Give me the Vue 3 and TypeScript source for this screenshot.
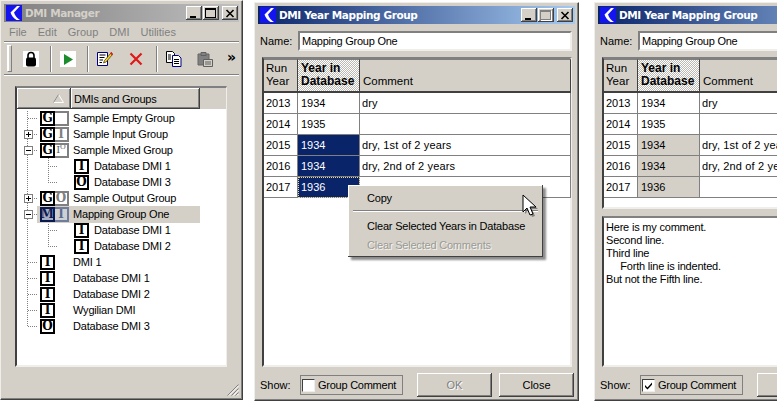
<script setup lang="ts">
type Row = { label: string; depth: number; exp?: string; kind: string; sel?: boolean }
const rows: Row[] = [
  { label: 'Sample Empty Group', depth: 0, kind: 'G_' },
  { label: 'Sample Input Group', depth: 0, exp: '+', kind: 'GI' },
  { label: 'Sample Mixed Group', depth: 0, exp: '-', kind: 'GM' },
  { label: 'Database DMI 1', depth: 1, kind: 'I' },
  { label: 'Database DMI 3', depth: 1, kind: 'O' },
  { label: 'Sample Output Group', depth: 0, exp: '+', kind: 'GO' },
  { label: 'Mapping Group One', depth: 0, exp: '-', kind: 'MI', sel: true },
  { label: 'Database DMI 1', depth: 1, kind: 'I' },
  { label: 'Database DMI 2', depth: 1, kind: 'I' },
  { label: 'DMI 1', depth: 0, kind: 'I' },
  { label: 'Database DMI 1', depth: 0, kind: 'I' },
  { label: 'Database DMI 2', depth: 0, kind: 'I' },
  { label: 'Wygilian DMI', depth: 0, kind: 'I' },
  { label: 'Database DMI 3', depth: 0, kind: 'O' },
]
const years = [
  { run: 2013, db: 1934, comment: 'dry', sel: false },
  { run: 2014, db: 1935, comment: '', sel: false },
  { run: 2015, db: 1934, comment: 'dry, 1st of 2 years', sel: true },
  { run: 2016, db: 1934, comment: 'dry, 2nd of 2 years', sel: true },
  { run: 2017, db: 1936, comment: '', sel: true },
]
const windows = [
  { id: 'a', left: 254, showComment: false },
  { id: 'b', left: 594, showComment: true },
]
const commentLines = ['Here is my comment.', 'Second line.', 'Third line', '     Forth line is indented.', 'But not the Fifth line.']
const menus = ['File', 'Edit', 'Group', 'DMI', 'Utilities']
const dots: string[] = []
for (let i = 0; i < 14; i++) {
  const d = rows[i].depth
  const y = 9.5 + i * 16
  if (d === 0) dots.push(`M28 ${y}H37`)
  else dots.push(`M48 ${y}H57`)
}
dots.push('M27.5 2V218', 'M48.5 41V73', 'M48.5 105V137')
const dotPath = dots.join('')
</script>

<template>
  <div class="desk">
    <section class="win mgr">
      <header class="title inactive">
        <svg class="logo" viewBox="0 0 16 16"><rect width="16" height="16" fill="#1414f0" /><path d="M11 1 4.500 7.500c1 3 3 5.500 6 7.500H14c-3-2-5-4.500-6-7.500L14 1z" fill="#fff" /></svg>
        <span class="ttext">DMI Manager</span>
        <span class="caps mgrcaps">
          <span class="cap"><i class="min"></i></span>
          <span class="cap"><i class="max"></i></span>
          <span class="cap close"><svg viewBox="0 0 10 9"><path d="M1.500 1l7 7M8.500 1l-7 7" stroke="#000" stroke-width="1.600" /></svg></span>
        </span>
      </header>
      <nav class="menubar"><span v-for="m in menus" :key="m">{{ m }}</span></nav>
      <div class="toolbar">
        <span class="grip"></span>
        <span class="tool w16 first">
          <svg viewBox="0 0 16 16"><rect width="16" height="16" fill="#fff" /><path d="M5 7V4.500a3 3 0 0 1 6 0V7" fill="none" stroke="#000" stroke-width="1.600" /><rect x="3" y="6.500" width="10" height="9" rx="2" fill="#000" /></svg>
        </span>
        <span class="tsep s1"></span>
        <span class="tool w16 t2">
          <svg viewBox="0 0 16 16"><rect width="16" height="16" fill="#fff" /><path d="M4 3l9 5.500L4 14z" fill="#1c8c2c" /></svg>
        </span>
        <span class="tsep s2"></span>
        <span class="tool w16 t3">
          <svg viewBox="0 0 16 16"><path d="M.5 1.500h10v13H.5z" fill="#fff" stroke="#000080" /><path d="M2.500 4h6M2.500 6.500h5M2.500 9h3.500M2.500 11.500h2.500" stroke="#000" /><path d="M14.500 1.500 7.500 9.500 6.500 12l2.500-1 6.500-7.500z" fill="#ffd820" stroke="#303000" stroke-width=".7" /><path d="M14 1l2 2-1 1.500-2-2z" fill="#e02020" /></svg>
        </span>
        <span class="tool w16 t4">
          <svg viewBox="0 0 16 16"><path d="M2.500 2.500l11 11M13.500 2.500l-11 11" stroke="#e01818" stroke-width="2.200" /></svg>
        </span>
        <span class="tsep s3"></span>
        <span class="tool w16 t5">
          <svg viewBox="0 0 16 16"><path d="M.5.5h6l2 2v9h-8z" fill="#fff" stroke="#000" /><path d="M6.500 4.500h6l2.500 2.500v8.500H6.500z" fill="#fff" stroke="#000080" /><path d="M8 8.500h5M8 10.500h5M8 12.500h5M2 4h3M2 6h3M2 8h3" stroke="#000" /></svg>
        </span>
        <span class="tool w16 t6">
          <svg viewBox="0 0 16 16"><path d="M1 3h11v11H1z" fill="#808080" /><path d="M4 1.500h5v3H4z" fill="#a0a0a0" stroke="#606060" /><path d="M1 3h11v11H1z" fill="none" stroke="#666" /><path d="M6.500 8.500h9v7h-9z" fill="#d4d0c8" stroke="#606060" /><path d="M8 11h6M8 13h6" stroke="#606060" /></svg>
        </span>
        <span class="more">»</span>
      </div>
      <div class="treebox">
        <div class="treehead">
          <span class="th1"><svg viewBox="0 0 11 9"><path d="M5.500 .5 10.500 8.500H.5z" fill="none" stroke="#fff" /><path d="M5.500 .5.5 8.500" stroke="#808080" /></svg></span>
          <span class="th2">DMIs and Groups</span>
        </div>
        <div class="treebody">
          <svg class="lines" width="211" height="260"><path :d="dotPath" fill="none" stroke="#808080" stroke-dasharray="1 1" /></svg>
          <div v-for="(r, i) in rows" :key="i" class="row">
            <span class="exp" :class="{ on: r.exp }">
              <template v-if="r.exp">
                <i class="h"></i><i v-if="r.exp === '+'" class="v"></i>
              </template>
            </span>
            <div class="main" :class="{ sel: r.sel, child: r.depth === 1 }">
              <span class="slot" :class="{ wide: r.depth === 0 }">
                <template v-if="r.kind.length === 2">
                  <span class="glyph"><b>{{ r.kind[0] }}</b></span>
                  <span class="glyph gray">
                    <b v-if="r.kind[1] === 'I' || r.kind[1] === 'O'">{{ r.kind[1] }}</b>
                    <small v-else-if="r.kind === 'GM'">I<sup>O</sup></small>
                  </span>
                </template>
                <span v-else class="glyph"><b>{{ r.kind }}</b></span>
              </span>
              <span class="rowtext">{{ r.label }}</span>
            </div>
          </div>
        </div>
      </div>
      <svg class="sizer" viewBox="0 0 12 12"><path d="M11.500 .5.5 11.500M11.500 4.500l-7 7M11.500 8.500l-3 3" stroke="#808080" /><path d="M11.500 2 2 11.500M11.500 6l-5 5.500M11.500 10l-1.500 1.500" stroke="#fff" /></svg>
    </section>

    <section v-for="w in windows" :key="w.id" class="win map" :style="{ left: w.left + 'px' }">
      <header class="title">
        <svg class="logo" viewBox="0 0 16 16"><rect width="16" height="16" fill="#1414f0" /><path d="M11 1 4.500 7.500c1 3 3 5.500 6 7.500H14c-3-2-5-4.500-6-7.500L14 1z" fill="#fff" /></svg>
        <span class="ttext">DMI Year Mapping Group</span>
        <span class="caps">
          <span class="cap"><i class="min"></i></span>
          <span class="cap"><i class="max dis"></i></span>
          <span class="cap close"><svg viewBox="0 0 10 9"><path d="M1.500 1l7 7M8.500 1l-7 7" stroke="#000" stroke-width="1.600" /></svg></span>
        </span>
      </header>
      <div class="namerow">
        <label>Name:</label>
        <div class="input">Mapping Group One</div>
      </div>
      <div class="frame">
        <div class="grid">
          <div class="hc"><span>Run<br />Year</span></div>
          <div class="hc hot"><strong>Year in<br />Database</strong></div>
          <div class="hc"><span>Comment</span></div>
          <template v-for="y in years" :key="y.run">
            <div class="c">{{ y.run }}</div>
            <div class="c mid" :class="{ picked: y.sel && !w.showComment, idle: y.sel && w.showComment, focus: y.run === 2017 && !w.showComment }">{{ y.db }}</div>
            <div class="c note">{{ y.comment }}</div>
          </template>
        </div>
      </div>
      <pre v-if="w.showComment" class="comment">{{ commentLines.join('\n') }}</pre>
      <footer class="foot">
        <label class="show">Show:</label>
        <span class="gc">
          <span class="check">
            <svg v-if="w.showComment" viewBox="0 0 9 9"><path d="M1 4l2.500 2.500L8 1.500v2.300L3.500 8.500 1 6z" fill="#000" /></svg>
          </span>
          Group Comment
        </span>
        <span class="btn off">OK</span>
        <span class="btn">Close</span>
      </footer>
      <div v-if="!w.showComment" class="popup">
        <div class="mi">Copy</div>
        <div class="msep"></div>
        <div class="mi m2">Clear Selected Years in Database</div>
        <div class="mi dim">Clear Selected Comments</div>
        <svg class="cursor" width="20" height="26" viewBox="0 0 20 26">
          <path d="M3 3v17l4-4 3 7 3-1-3-7h6z" fill="#505050" opacity=".6" />
          <path d="M1 1v17l4-4 3 7 3-1-3-7h6z" fill="#fff" stroke="#000" />
        </svg>
      </div>
    </section>
  </div>
</template>

<style>
html, body { margin: 0; background: #fff; }
</style>

<style scoped>
.desk {
  position: relative;
  width: 777px;
  height: 402px;
  overflow: hidden;
  background: #fff;
  font: 11px "Liberation Sans", Tahoma, sans-serif;
  color: #000;
}
.win {
  position: absolute;
  box-sizing: border-box;
  background: #d4d0c8;
  display: flex;
  flex-direction: column;
  padding: 3px;
  border-right: 1px solid #404040;
  border-bottom: 1px solid #404040;
  border-top: 1px solid #f0eeea;
  border-left: 1px solid #f0eeea;
  box-shadow: inset -1px -1px 0 #808080;
}
.mgr { left: 0; top: 0; width: 243px; height: 400px; }
.map { top: 2px; width: 325px; height: 399px; }
.title {
  height: 18px;
  flex: none;
  display: flex;
  align-items: center;
  padding: 0 2px;
  background: linear-gradient(90deg, #0a246a, #a6caf0);
  color: #fff;
}
.title.inactive {
  background: linear-gradient(90deg, #808080, #c0c0c0);
  color: #d4d0c8;
}
.logo { width: 16px; height: 16px; flex: none; }
.ttext {
  margin-left: 3px;
  font: bold 10.500px "DejaVu Sans", sans-serif;
  letter-spacing: -.4px;
  white-space: nowrap;
}
.caps { margin-left: auto; display: flex; gap: 1px; }
.mgrcaps { margin-right: -1px; }
.cap {
  box-sizing: border-box;
  width: 16px;
  height: 14px;
  background: #d4d0c8;
  box-shadow: inset -1px -1px 0 #404040, inset 1px 1px 0 #fff, inset -2px -2px 0 #808080;
  position: relative;
  display: flex;
  align-items: center;
  justify-content: center;
}
.cap.close { margin-left: 2px; }
.cap svg { width: 10px; height: 9px; }
.min { width: 6px; height: 2px; background: #000; margin-top: 7px; margin-right: 3px; }
.max { width: 9px; height: 7px; border: 1px solid #000; border-top-width: 2px; margin-right: 1px; }
.max.dis { border-color: #808080; box-shadow: 1px 1px 0 #fff; }
.menubar {
  display: flex;
  height: 19px;
  flex: none;
  align-items: center;
  gap: 11px;
  padding-left: 5px;
  color: #808080;
  font-size: 11px;
  border-bottom: 1px solid #808080;
  box-shadow: 0 1px 0 #fff;
}
.toolbar {
  height: 31px;
  flex: none;
  display: flex;
  align-items: center;
  border-bottom: 1px solid #808080;
  box-shadow: 0 1px 0 #fff;
  margin-top: 1px;
}
.grip {
  width: 3px;
  height: 25px;
  margin-left: 3px;
  background: #d4d0c8;
  border: 1px solid #808080;
  border-top-color: #fff;
  border-left-color: #fff;
  box-shadow: inset 1px 0 0 #fff;
}
.tool { display: block; height: 16px; flex: none; }
.tool svg { display: block; width: 16px; height: 16px; }
.w16 { width: 16px; }
.first { margin-left: 11px; }
.tsep { width: 1px; height: 26px; background: #808080; box-shadow: 1px 0 0 #fff; flex: none; }
.s1 { margin-left: 11px; }
.t2 { margin-left: 9px; }
.s2 { margin-left: 11px; }
.t3 { margin-left: 9px; }
.t4 { margin-left: 15px; }
.s3 { margin-left: 12px; }
.t5 { margin-left: 9px; }
.t6 { margin-left: 15px; }
.more { margin-left: 14px; font: bold 14px "DejaVu Sans", sans-serif; margin-top: -3px; }
.treebox {
  margin: 11px 0 0 11px;
  width: 212px;
  height: 281px;
  box-sizing: border-box;
  border: 1px solid #808080;
  border-left: 2px solid #404040;
  border-top: 2px solid #808080;
  border-right-color: #f0eeea;
  border-bottom: 2px solid #f0eeea;
  background: #d4d0c8;
  display: flex;
  flex-direction: column;
  flex: none;
}
.treehead { display: flex; height: 21px; flex: none; }
.th1, .th2 {
  box-sizing: border-box;
  height: 21px;
  display: flex;
  align-items: center;
  box-shadow: inset -1px -1px 0 #404040, inset 1px 1px 0 #fff, inset -2px -2px 0 #808080;
}
.th1 { width: 54px; justify-content: flex-end; padding-right: 7px; }
.th1 svg { width: 11px; height: 9px; }
.th2 { width: 129px; padding-left: 3px; letter-spacing: -.25px; }
.treebody { position: relative; flex: 1; background: #fff; padding-top: 1px; }
.lines { position: absolute; left: -17px; top: 0; pointer-events: none; }
.row { height: 16px; display: flex; align-items: center; position: relative; padding-left: 7px; }
.exp { width: 9px; height: 9px; flex: none; position: relative; box-sizing: border-box; }
.exp.on { border: 1px solid #808080; background: #fff; }
.exp .h { position: absolute; left: 1px; top: 3px; width: 5px; height: 1px; background: #000; }
.exp .v { position: absolute; left: 3px; top: 1px; width: 1px; height: 5px; background: #000; }
.main {
  margin-left: 4px;
  width: 163px;
  height: 16px;
  padding-left: 3px;
  box-sizing: border-box;
  display: flex;
  align-items: center;
  flex: none;
  letter-spacing: -.2px;
}
.main.child { padding-left: 37px; }
.main.sel { background: #d4d0c8; height: 17px; }
.main.sel .glyph { border-color: #0a1a50; background: #a8aec4; color: #0a1a50; }
.main.sel .glyph.gray { border-color: #6f7c9e; background: #cfd0d0; color: #5a6a90; }
.slot { width: 20px; flex: none; display: flex; }
.slot.wide { width: 33px; }
.glyph {
  box-sizing: border-box;
  width: 15px;
  height: 15px;
  border: 2px solid #000;
  background: #fff;
  display: flex;
  align-items: center;
  justify-content: center;
  font: bold 12px/1 "DejaVu Serif", serif;
  letter-spacing: 0;
  overflow: hidden;
}
.glyph.gray { border-color: #808080; border-left-width: 0; color: #808080; width: 14px; }
.glyph small { font: 10px/1 "DejaVu Serif", serif; color: #606060; }
.glyph sup { font-size: 7px; vertical-align: 4px; line-height: 0; }
.rowtext { white-space: nowrap; }
.sizer { position: absolute; right: 3px; bottom: 3px; width: 12px; height: 12px; }

.namerow { display: flex; align-items: center; margin-top: 7px; flex: none; }
.namerow label { width: 40px; padding-left: 2px; box-sizing: border-box; }
.input {
  width: 274px;
  height: 20px;
  box-sizing: border-box;
  background: #fff;
  border: 2px solid #808080;
  border-right-color: #f0eeea;
  border-bottom-color: #f0eeea;
  padding-left: 2px;
  line-height: 16px;
  letter-spacing: -.25px;
  white-space: nowrap;
}
.frame {
  flex: 1;
  min-height: 0;
  margin: 6px 4px 0;
  box-sizing: border-box;
  width: 310px;
  background: #fff;
  border: 2px solid #808080;
  border-right-color: #f0eeea;
  border-bottom-color: #f0eeea;
  border-left-color: #404040;
}
.grid {
  display: grid;
  grid-template-columns: 34px 62px 211px;
  grid-template-rows: 34px;
  grid-auto-rows: 21px;
}
.hc {
  box-sizing: border-box;
  background: #d4d0c8;
  border: 1px solid #404040;
  border-left-width: 0;
  border-top-color: #808080;
  border-bottom-width: 2px;
  padding: 3px 0 3px 2px;
  display: flex;
  align-items: flex-end;
  line-height: 13px;
  font-size: 11.500px;
}
.hc:nth-child(3) { padding-left: 3px; }
.hot {
  background: repeating-conic-gradient(#bdbab3 0 25%, #fff 0 50%) 0 0 / 2px 2px;
  padding-left: 3px;
}
.hot strong { font: bold 12px/13px "Liberation Sans", sans-serif; white-space: nowrap; }
.c {
  box-sizing: border-box;
  border-right: 1px solid #808080;
  border-bottom: 1px solid #808080;
  padding-left: 2px;
  line-height: 20px;
  white-space: nowrap;
  overflow: hidden;
}
.mid { padding-left: 3px; }
.note { letter-spacing: .15px; }
.picked { background: #0a246a; color: #fff; }
.idle { background: #d4d0c8; }
.focus { outline: 1px dotted #e8d890; outline-offset: -1px; }
.comment {
  flex: none;
  box-sizing: border-box;
  width: 310px;
  height: 151px;
  margin: 7px 4px 0;
  padding: 3px 2px;
  background: #fff;
  border: 2px solid #808080;
  border-left-color: #404040;
  border-right-color: #f0eeea;
  border-bottom-color: #f0eeea;
  font: 11px/13px "Liberation Sans", sans-serif;
  letter-spacing: -.2px;
}
.foot { height: 24px; flex: none; margin-top: 6px; display: flex; align-items: center; }
.show { margin-left: 2px; width: 40px; }
.gc {
  box-sizing: border-box;
  width: 103px;
  height: 20px;
  border: 1px solid #808080;
  display: flex;
  align-items: center;
  gap: 3px;
  padding-left: 1px;
  letter-spacing: -.25px;
  white-space: nowrap;
}
.check {
  box-sizing: border-box;
  width: 13px;
  height: 13px;
  background: #fff;
  border: 1px solid #404040;
  border-right-color: #f0eeea;
  border-bottom-color: #f0eeea;
  display: flex;
  align-items: center;
  justify-content: center;
}
.check svg { width: 9px; height: 9px; }
.btn {
  box-sizing: border-box;
  width: 75px;
  height: 24px;
  display: flex;
  align-items: center;
  justify-content: center;
  box-shadow: inset -1px -1px 0 #404040, inset 1px 1px 0 #fff, inset -2px -2px 0 #808080;
  flex: none;
}
.btn.off { margin-left: 14px; color: #808080; text-shadow: 1px 1px 0 #fff; }
.btn:last-child { margin-left: 7px; }
.popup {
  position: absolute;
  left: 93px;
  top: 182px;
  width: 195px;
  height: 72px;
  box-sizing: border-box;
  background: #d4d0c8;
  box-shadow: inset -1px -1px 0 #404040, inset 1px 1px 0 #fff, 3px 3px 2px rgba(0, 0, 0, .45);
  padding-top: 4px;
  letter-spacing: -.2px;
}
.mi { height: 18px; line-height: 18px; padding-left: 19px; white-space: nowrap; }
.msep { margin: 3px 5px 0; height: 1px; background: #808080; box-shadow: 0 1px 0 #fff; }
.m2 { margin-top: 6px; height: 19px; line-height: 19px; }
.dim { color: #9a9a94; text-shadow: 1px 1px 0 #f4f4f0; }
.cursor { position: absolute; left: 174px; top: 9px; }
</style>
